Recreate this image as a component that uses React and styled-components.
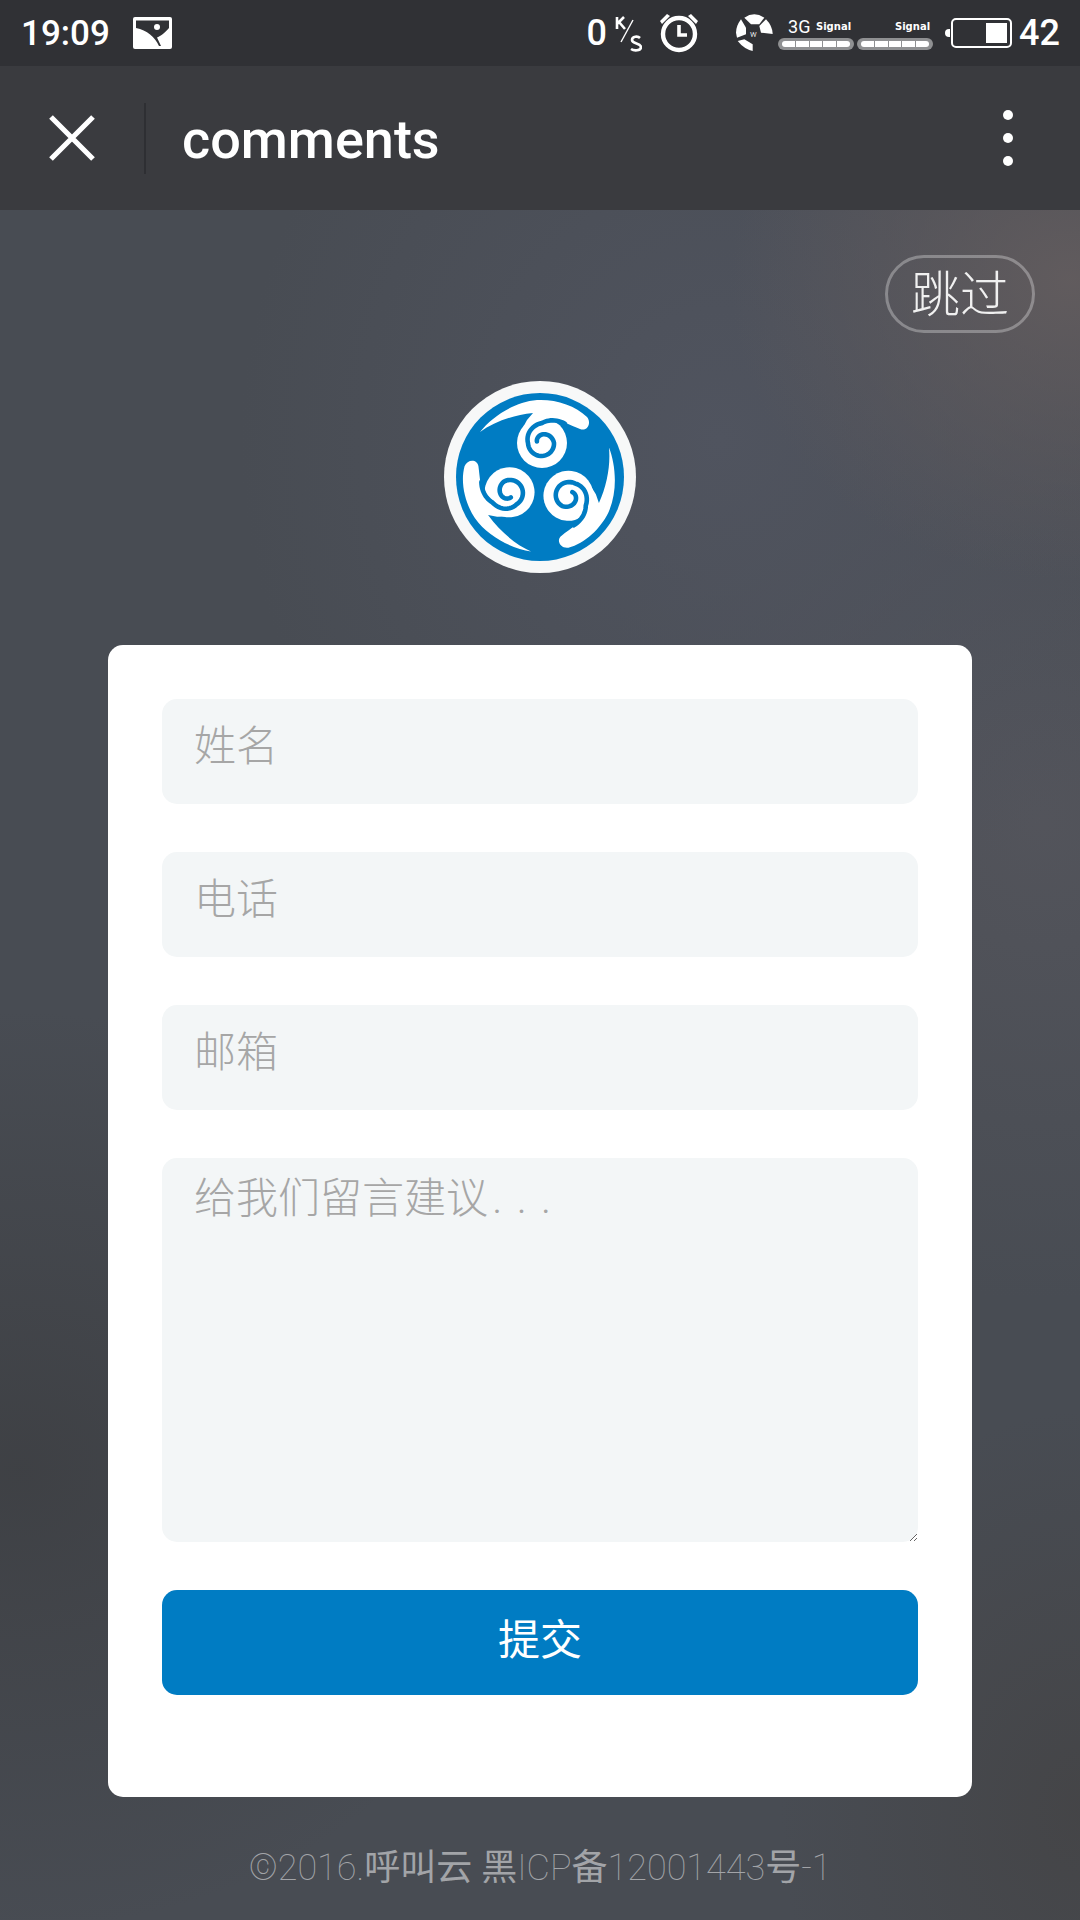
import styled, { createGlobalStyle } from "styled-components";

const GlobalStyle = createGlobalStyle`
    * {
        box-sizing: border-box;
    }
    html, body {
        margin: 0;
        padding: 0;
        background: #45474c;
    }
    body {
        font-family: Roboto, "Noto Sans CJK SC", sans-serif;
    }
`;

// angle in degrees and radius along the blue curl of the logo
const CURL = [
    [-40, 30],
    [-90, 20],
    [-180, 14],
    [-270, 13],
    [-360, 12],
    [-450, 8.5],
    [-530, 5]
];

function curlPath(cx, cy) {
    const points = [];
    for (let i = 0; i < CURL.length - 1; i++) {
        const [a0, r0] = CURL[i];
        const [a1, r1] = CURL[i + 1];
        for (let s = 0; s < 12; s++) {
            const t = s / 12;
            const angle = ((a0 + (a1 - a0) * t) * Math.PI) / 180;
            const radius = r0 + (r1 - r0) * t;
            points.push(`${(cx + radius * Math.cos(angle)).toFixed(2)} ${(cy + radius * Math.sin(angle)).toFixed(2)}`);
        }
    }
    return "M" + points.join("L");
}

function LogoMark() {
    const arm = (
        <>
            <path
                d="M-60 -45C-48 -60 -26 -75 -3 -77C15 -78 35 -72 47 -60C52 -54 47 -45 40 -48C30 -52 18 -59 5 -58L2 -50L-20 -44L-13 -57L-7 -64C-27 -62 -46 -55 -60 -45Z"
                fill="#fff"
            />
            <circle cx="2" cy="-34" r="25" fill="#fff" />
            <path
                d={curlPath(2, -34)}
                fill="none"
                stroke="#007cc3"
                strokeWidth="4.6"
                strokeLinecap="round"
            />
        </>
    );
    return (
        <svg width="192" height="192" viewBox="-96 -96 192 192">
            <circle r="96" fill="#f7f8f8" />
            <circle r="84" fill="#007cc3" />
            <g>{arm}</g>
            <g transform="rotate(120)">{arm}</g>
            <g transform="rotate(240)">{arm}</g>
        </svg>
    );
}

export default function App() {
    return (
        <>
            <GlobalStyle />
            <Page>
                <StatusBar>
                    <StatusGroup>
                        <Clock>19:09</Clock>
                        <svg width="39" height="32" viewBox="0 0 39 32">
                            <rect width="39" height="32" rx="2" fill="#fff" />
                            <path d="M3 3.5H36V11C31 17 27 19 24 20.5L28 29H26C22 20 14 13 3 11Z" fill="#303135" />
                            <circle cx="24" cy="10" r="3" fill="#fff" />
                        </svg>
                    </StatusGroup>
                    <StatusGroup>
                        <Speed>
                            <SpeedZero>0</SpeedZero>
                            <SpeedUnit>
                                <svg width="27" height="36" viewBox="0 0 27 36">
                                    <path d="M2 1V13M2 8L9 1M4 6L10 13" fill="none" stroke="#fff" strokeWidth="2.6" />
                                    <path d="M18 4L6 26" fill="none" stroke="#fff" strokeWidth="1.4" />
                                    <path d="M25 22C23 20 17 20 17 24C17 28 26 27 26 31C26 35 19 35 16 33" fill="none" stroke="#fff" strokeWidth="2.6" />
                                </svg>
                            </SpeedUnit>
                        </Speed>
                        <AlarmIcon viewBox="0 0 40 40" width="40" height="40">
                            <circle cx="20" cy="21" r="16" fill="none" stroke="#fff" strokeWidth="4.4" />
                            <path d="M20 12V22H28" fill="none" stroke="#fff" strokeWidth="3.6" />
                            <path d="M1 8L8 1L11 3L3 11ZM39 8L32 1L29 3L37 11Z" fill="#fff" />
                        </AlarmIcon>
                        <WifiIcon viewBox="0 0 38 38" width="38" height="38">
                            <path d="M8.3 3.7Q18.3 -3 28.3 3.7L23.3 10.3H15Z" fill="#fff" />
                            <path d="M30 5.3Q36.5 12 36.7 20L25 18.7L23.3 12Z" fill="#fff" />
                            <path d="M5 5.3Q0 12 0 18.7L1 23.7L10 20.3V13.7Z" fill="#fff" />
                            <path d="M1.7 27Q8 35 16.7 37V30.3L8.3 25.3Z" fill="#fff" />
                            <text x="14" y="23" fontSize="9" fontFamily="Roboto" fill="#ddd">w</text>
                        </WifiIcon>
                        <SignalGroup>
                            <SignalColumn>
                                <SignalLabels>
                                    <NetLabel>3G</NetLabel>
                                    <SignalLabel>Signal</SignalLabel>
                                </SignalLabels>
                                <SignalBar>
                                    {[0, 1, 2, 3, 4].map(i => <SignalCell key={i} />)}
                                </SignalBar>
                            </SignalColumn>
                            <SignalColumn>
                                <SignalLabels $end>
                                    <SignalLabel>Signal</SignalLabel>
                                </SignalLabels>
                                <SignalBar>
                                    {[0, 1, 2, 3, 4].map(i => <SignalCell key={i} />)}
                                </SignalBar>
                            </SignalColumn>
                        </SignalGroup>
                        <Battery>
                            <BatteryNub />
                            <BatteryBody>
                                <BatteryFill />
                            </BatteryBody>
                        </Battery>
                        <BatteryLevel>42</BatteryLevel>
                    </StatusGroup>
                </StatusBar>

                <NavBar>
                    <CloseButton>
                        <svg width="46" height="46" viewBox="0 0 46 46">
                            <path d="M2 2L44 44M44 2L2 44" stroke="#fff" strokeWidth="5.2" fill="none" />
                        </svg>
                    </CloseButton>
                    <NavDivider />
                    <NavTitle>comments</NavTitle>
                    <MenuDots>
                        <MenuDot />
                        <MenuDot />
                        <MenuDot />
                    </MenuDots>
                </NavBar>

                <Main>
                    <SkipButton>跳过</SkipButton>
                    <Logo>
                        <LogoMark />
                    </Logo>
                    <Card>
                        <Field type="text" placeholder="姓名" />
                        <Field type="text" placeholder="电话" />
                        <Field type="text" placeholder="邮箱" />
                        <MessageField placeholder={"给我们留言建议\u200A.\u2004.\u2004."} />
                        <SubmitButton type="button">提交</SubmitButton>
                    </Card>
                    <Footer>
                        ©2016.<FooterCjk>呼叫云 黑</FooterCjk>ICP<FooterCjk>备</FooterCjk>12001443<FooterCjk>号</FooterCjk>-1
                    </Footer>
                </Main>
            </Page>
        </>
    );
}

const Page = styled.div`
    width: 1080px;
    height: 1920px;
    display: flex;
    flex-direction: column;
    overflow: hidden;
`;

const StatusBar = styled.div`
    height: 66px;
    padding: 0 20px 0 21px;
    display: flex;
    justify-content: space-between;
    align-items: center;
    background: #303135;
    color: #fff;
`;

const StatusGroup = styled.div`
    display: flex;
    align-items: center;
`;

const Clock = styled.span`
    font-size: 35px;
    font-weight: 500;
    margin-right: 23px;
`;

const Speed = styled.div`
    display: flex;
    align-items: center;
    margin-right: 17px;
`;

const SpeedZero = styled.span`
    font-size: 36px;
    font-weight: 500;
    margin-right: 8px;
`;

const SpeedUnit = styled.span`
    display: flex;
    margin-top: 2px;
`;

const AlarmIcon = styled.svg`
    margin-right: 37px;
`;

const WifiIcon = styled.svg`
    margin-right: 4px;
`;

const SignalGroup = styled.div`
    display: flex;
    gap: 3px;
    margin-right: 12px;
`;

const SignalColumn = styled.div`
    width: 76px;
    display: flex;
    flex-direction: column;
    gap: 2px;
`;

const SignalLabels = styled.div`
    height: 19px;
    padding: 0 3px 0 10px;
    display: flex;
    align-items: center;
    justify-content: ${props => (props.$end ? "flex-end" : "space-between")};
`;

const NetLabel = styled.span`
    font-size: 18px;
    font-weight: 400;
`;

const SignalLabel = styled.span`
    font-family: "DejaVu Sans", sans-serif;
    font-size: 10px;
    font-weight: 700;
`;

const SignalBar = styled.div`
    height: 12px;
    padding: 3px 4px;
    display: flex;
    gap: 1px;
    background: #8f9092;
    border-radius: 6px;
`;

const SignalCell = styled.span`
    flex: 1;
    background: #fff;
    &:first-child {
        border-radius: 3px 0 0 3px;
    }
    &:last-child {
        border-radius: 0 3px 3px 0;
    }
`;

const Battery = styled.div`
    display: flex;
    align-items: center;
    margin-right: 7px;
`;

const BatteryNub = styled.span`
    width: 5px;
    height: 8px;
    background: #fff;
    border-radius: 4px 0 0 4px;
`;

const BatteryBody = styled.div`
    width: 61px;
    height: 30px;
    margin-left: 1px;
    padding: 3px;
    display: flex;
    justify-content: flex-end;
    border: 2px solid #fff;
    border-radius: 5px;
`;

const BatteryFill = styled.span`
    width: 21px;
    background: #fff;
`;

const BatteryLevel = styled.span`
    font-size: 36px;
    font-weight: 500;
`;

const NavBar = styled.div`
    height: 144px;
    padding-left: 49px;
    display: flex;
    align-items: center;
    background: #3a3b3f;
`;

const CloseButton = styled.div`
    width: 46px;
    height: 46px;
    display: flex;
`;

const NavDivider = styled.span`
    width: 2px;
    height: 71px;
    margin-left: 49px;
    background: #2e2f33;
`;

const NavTitle = styled.h1`
    flex: 1;
    margin: 3px 0 0 36px;
    font-size: 54px;
    font-weight: 500;
    color: #fff;
`;

const MenuDots = styled.div`
    width: 10px;
    margin-right: 67px;
    display: flex;
    flex-direction: column;
    gap: 13px;
`;

const MenuDot = styled.span`
    width: 10px;
    height: 10px;
    background: #fff;
    border-radius: 50%;
`;

const Main = styled.main`
    flex: 1;
    padding: 45px 0 0;
    display: flex;
    flex-direction: column;
    align-items: center;
    background:
        radial-gradient(ellipse 340px 300px at 1070px 70px, rgba(98, 92, 94, 0.95), rgba(98, 92, 94, 0) 100%),
        radial-gradient(ellipse 480px 520px at 720px 230px, #50545f, rgba(80, 84, 95, 0) 100%),
        radial-gradient(ellipse 460px 480px at 1040px 610px, rgba(84, 85, 92, 0.9), rgba(84, 85, 92, 0) 100%),
        radial-gradient(ellipse 520px 460px at 20px 1260px, rgba(62, 64, 68, 0.95), rgba(62, 64, 68, 0) 100%),
        radial-gradient(ellipse 300px 400px at 1080px 1600px, rgba(68, 68, 70, 0.9), rgba(68, 68, 70, 0) 100%),
        #484c53;
`;

const SkipButton = styled.div`
    align-self: flex-end;
    width: 150px;
    height: 78px;
    margin-right: 45px;
    padding-bottom: 8px;
    display: flex;
    justify-content: center;
    align-items: center;
    font-size: 49px;
    font-weight: 300;
    color: #f0f0f0;
    border: 3px solid rgba(255, 255, 255, 0.3);
    border-radius: 39px;
`;

const Logo = styled.div`
    width: 192px;
    height: 192px;
    margin-top: 48px;
    display: flex;
`;

const Card = styled.form`
    width: 864px;
    height: 1152px;
    margin-top: 72px;
    padding: 54px;
    display: flex;
    flex-direction: column;
    gap: 48px;
    background: #fff;
    border-radius: 15px;
`;

const Field = styled.input`
    display: block;
    width: 100%;
    height: 105px;
    padding: 0 32px 10px;
    font-family: Roboto, "Noto Sans CJK SC", sans-serif;
    font-size: 42px;
    font-weight: 300;
    color: #555;
    background: #f3f6f7;
    border: none;
    border-radius: 15px;
    outline: none;

    &::placeholder {
        color: #a6a6a6;
    }
`;

const MessageField = styled.textarea`
    display: block;
    width: 100%;
    height: 384px;
    padding: 6px 32px;
    font-family: Roboto, "Noto Sans CJK SC", sans-serif;
    font-size: 42px;
    font-weight: 300;
    color: #555;
    background: #f3f6f7;
    border: none;
    border-radius: 15px;
    outline: none;

    &::placeholder {
        color: #a6a6a6;
    }
`;

const SubmitButton = styled.button`
    display: block;
    width: 100%;
    height: 105px;
    padding: 0 0 12px;
    font-family: Roboto, "Noto Sans CJK SC", sans-serif;
    font-size: 42px;
    font-weight: 400;
    color: #fff;
    background: #007cc3;
    border: none;
    border-radius: 15px;
`;

const Footer = styled.footer`
    margin-top: 50px;
    font-size: 36px;
    font-weight: 100;
    line-height: 42px;
    color: #a2a4a8;
    white-space: nowrap;
`;

const FooterCjk = styled.span`
    font-weight: 400;
`;
